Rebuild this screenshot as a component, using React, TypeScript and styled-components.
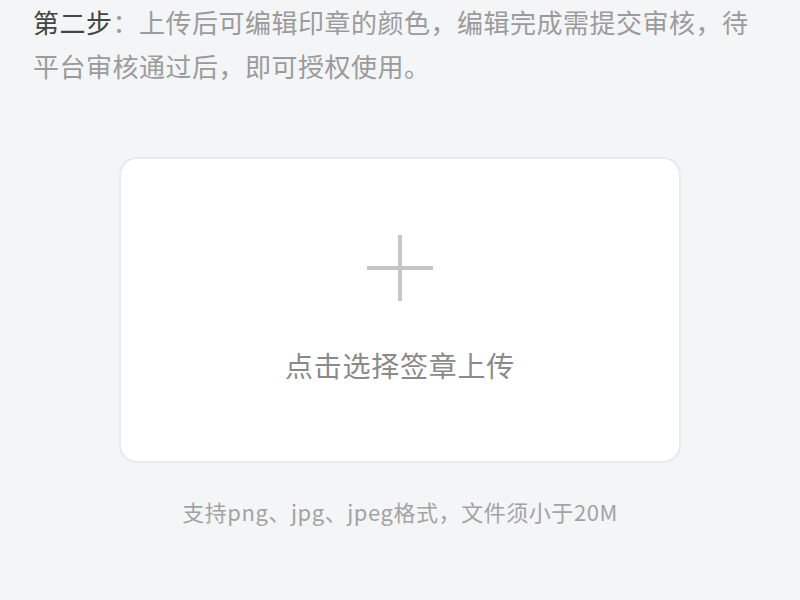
import React from "react";
import styled, { createGlobalStyle } from "styled-components";

const GlobalStyle = createGlobalStyle`
  html, body {
    margin: 0;
    padding: 0;
    background: #f4f5f7;
  }
  body {
    font-family: "Noto Sans CJK SC", "Noto Sans", sans-serif;
  }
`;

const Page = styled.div`
  width: 800px;
  height: 600px;
  box-sizing: border-box;
  background: #f4f5f7;
  display: flex;
  flex-direction: column;
  align-items: center;
  overflow: hidden;
`;

const Intro = styled.p`
  align-self: stretch;
  margin: 0;
  padding: 0 40px 0 33px;
  font-size: 26px;
  letter-spacing: 0.5px;
  line-height: 44px;
  color: #9b9b9b;
`;

const Step = styled.span`
  color: #444444;
`;

const UploadCard = styled.div`
  margin-top: 69px;
  width: 562px;
  height: 306px;
  box-sizing: border-box;
  background: #ffffff;
  border: 2px solid #e8e9eb;
  border-radius: 18px;
  display: flex;
  flex-direction: column;
  align-items: center;
  cursor: pointer;
`;

const PlusIcon = styled.svg`
  margin-top: 76px;
  width: 66px;
  height: 66px;
  display: block;
`;

const CardLabel = styled.div`
  margin-top: 44px;
  font-size: 28px;
  letter-spacing: 0.75px;
  line-height: 40px;
  color: #8a8a8a;
`;

const Hint = styled.div`
  margin-top: 33px;
  font-size: 22px;
  letter-spacing: 0.55px;
  line-height: 30px;
  color: #a3a3a3;
`;

export default function App() {
  return (
    <>
      <GlobalStyle />
      <Page>
        <Intro>
          <Step>第二步</Step>：上传后可编辑印章的颜色，编辑完成需提交审核，待平台审核通过后，即可授权使用。
        </Intro>
        <UploadCard>
          <PlusIcon viewBox="0 0 66 66">
            <line x1="33" y1="1" x2="33" y2="65" stroke="#c5c5c5" strokeWidth="4" strokeLinecap="round" />
            <line x1="1" y1="33" x2="65" y2="33" stroke="#c5c5c5" strokeWidth="4" strokeLinecap="round" />
          </PlusIcon>
          <CardLabel>点击选择签章上传</CardLabel>
        </UploadCard>
        <Hint>支持png、jpg、jpeg格式，文件须小于20M</Hint>
      </Page>
    </>
  );
}
